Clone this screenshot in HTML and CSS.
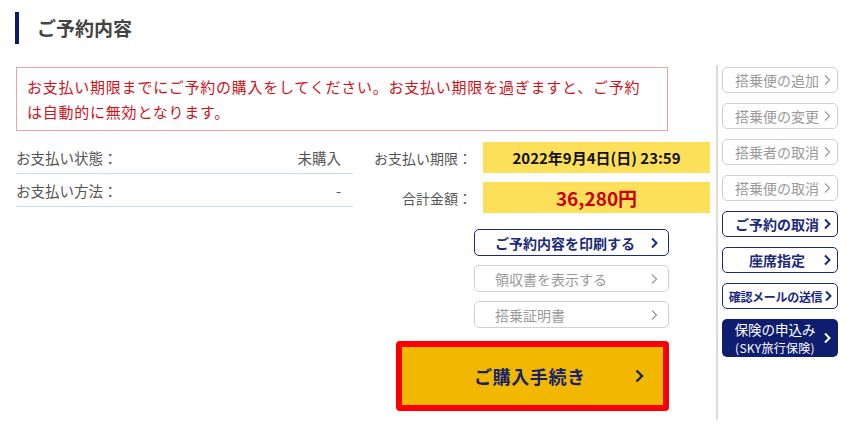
FILE: index.html
```html
<!DOCTYPE html>
<html lang="ja">
<head>
<meta charset="utf-8">
<title>ご予約内容</title>
<link rel="stylesheet" href="styles.css">
</head>
<body>
<div class="page">
  <div class="main">
    <h2 class="title">ご予約内容</h2>
    <div class="notice">お支払い期限までにご予約の購入をしてください。お支払い期限を過ぎますと、ご予約は自動的に無効となります。</div>
    <div class="info">
      <div class="status">
        <div class="status-row"><span>お支払い状態：</span><span>未購入</span></div>
        <div class="status-row"><span>お支払い方法：</span><span>-</span></div>
      </div>
      <div class="payment">
        <div class="pay-label">お支払い期限：</div>
        <div class="pay-box pay-date">2022年9月4日(日) 23:59</div>
        <div class="pay-label">合計金額：</div>
        <div class="pay-box pay-total">36,280円</div>
      </div>
    </div>
    <div class="actions">
      <a class="btn btn-navy"><span class="btn-text">ご予約内容を印刷する</span><svg class="chev" viewBox="0 0 8 12"><polyline points="2,1.5 6.5,6 2,10.5"/></svg></a>
      <a class="btn btn-off"><span class="btn-text">領収書を表示する</span><svg class="chev thin" viewBox="0 0 8 12"><polyline points="2,1.5 6.5,6 2,10.5"/></svg></a>
      <a class="btn btn-off"><span class="btn-text">搭乗証明書</span><svg class="chev thin" viewBox="0 0 8 12"><polyline points="2,1.5 6.5,6 2,10.5"/></svg></a>
    </div>
    <a class="purchase"><span class="purchase-text">ご購入手続き</span><svg class="chev big" viewBox="0 0 10 14"><polyline points="2.5,1.5 8,7 2.5,12.5"/></svg></a>
  </div>
  <div class="divider"></div>
  <div class="side">
    <a class="sbtn sbtn-off"><span class="sbtn-text">搭乗便の追加</span><svg class="chev thin" viewBox="0 0 8 12"><polyline points="2,1.5 6.5,6 2,10.5"/></svg></a>
    <a class="sbtn sbtn-off"><span class="sbtn-text">搭乗便の変更</span><svg class="chev thin" viewBox="0 0 8 12"><polyline points="2,1.5 6.5,6 2,10.5"/></svg></a>
    <a class="sbtn sbtn-off"><span class="sbtn-text">搭乗者の取消</span><svg class="chev thin" viewBox="0 0 8 12"><polyline points="2,1.5 6.5,6 2,10.5"/></svg></a>
    <a class="sbtn sbtn-off"><span class="sbtn-text">搭乗便の取消</span><svg class="chev thin" viewBox="0 0 8 12"><polyline points="2,1.5 6.5,6 2,10.5"/></svg></a>
    <a class="sbtn sbtn-navy"><span class="sbtn-text">ご予約の取消</span><svg class="chev" viewBox="0 0 8 12"><polyline points="2,1.5 6.5,6 2,10.5"/></svg></a>
    <a class="sbtn sbtn-navy"><span class="sbtn-text">座席指定</span><svg class="chev" viewBox="0 0 8 12"><polyline points="2,1.5 6.5,6 2,10.5"/></svg></a>
    <a class="sbtn sbtn-navy sbtn-small"><span class="sbtn-text">確認メールの送信</span><svg class="chev" viewBox="0 0 8 12"><polyline points="2,1.5 6.5,6 2,10.5"/></svg></a>
    <a class="sbtn sbtn-fill"><span class="sbtn-text"><span class="ins-main">保険の申込み</span><span class="ins-sub">(SKY旅行保険)</span></span><svg class="chev" viewBox="0 0 8 12"><polyline points="2,1.5 6.5,6 2,10.5"/></svg></a>
  </div>
</div>
</body>
</html>
```

FILE: styles.css
```css
* { box-sizing: border-box; }
html, body { margin: 0; padding: 0; background: #fff; }
body {
  font-family: "Noto Sans CJK JP", "Noto Sans", sans-serif;
  color: #555;
  width: 847px;
  height: 436px;
  overflow: hidden;
}
a { text-decoration: none; }

.page {
  display: flex;
  align-items: flex-start;
  padding-left: 16px;
}
.main {
  width: 694px;
  display: flex;
  flex-direction: column;
}
.title {
  margin: 12px 0 0 -1px;
  height: 32px;
  border-left: 4px solid #0b1a6b;
  padding-left: 18px;
  font-size: 19px;
  font-weight: 700;
  line-height: 32px;
  color: #444;
}
.notice {
  margin-top: 23px;
  width: 652px;
  border: 1px solid #eca3a3;
  padding: 6px 20px 6px 10px;
  font-size: 15px;
  letter-spacing: 0.77px;
  line-height: 25px;
  color: #d0121b;
}
.info {
  display: flex;
  margin-top: 10px;
}
.status {
  width: 337px;
}
.status-row {
  height: 33px;
  display: flex;
  justify-content: space-between;
  align-items: center;
  padding-right: 12px;
  border-bottom: 1px solid #c4dcf1;
  font-size: 14.5px;
  color: #555;
}
.payment {
  margin-left: auto;
  margin-top: 1px;
  display: grid;
  grid-template-columns: auto 227px;
  column-gap: 11px;
  row-gap: 9px;
  align-items: center;
}
.pay-label {
  text-align: right;
  font-size: 14px;
  color: #555;
}
.pay-box {
  height: 31px;
  background: #fde05a;
  display: flex;
  align-items: center;
  justify-content: center;
  font-weight: 700;
}
.pay-date { font-size: 15px; color: #111; }
.pay-total { font-size: 19px; color: #c8000a; }

.actions {
  margin-top: 16px;
  margin-left: 458px;
  width: 195px;
  display: flex;
  flex-direction: column;
  gap: 9px;
}
.btn {
  height: 27px;
  border-radius: 5px;
  display: flex;
  align-items: center;
  padding: 0 10px 0 20px;
  font-size: 14px;
}
.btn-text { flex: 1; }
.btn-navy {
  border: 1px solid #1b2a7b;
  color: #1b2a7b;
  font-weight: 700;
}
.btn-off {
  border: 1px solid #cfcfcf;
  color: #9a9a9a;
}
.chev {
  width: 8px;
  height: 12px;
  flex: none;
  fill: none;
  stroke: currentColor;
  stroke-width: 2;
}
.chev.thin { stroke-width: 1.2; }
.chev.big { width: 10px; height: 14px; stroke-width: 2.4; }

.purchase {
  margin-top: 13px;
  margin-left: 380px;
  width: 273px;
  height: 70px;
  border: 6px solid #fb0000;
  border-radius: 4px;
  background: #f2b800;
  display: flex;
  align-items: center;
  padding: 0 19px 0 72px;
  color: #15236e;
  font-size: 18px;
  font-weight: 700;
}
.purchase-text { flex: 1; letter-spacing: 0.6px; }

.divider {
  margin-top: 65px;
  margin-left: 6px;
  width: 2px;
  height: 355px;
  background: #dcdcdc;
}
.side {
  margin-top: 67px;
  margin-left: 4px;
  width: 116px;
  display: flex;
  flex-direction: column;
  gap: 10px;
}
.sbtn {
  height: 26px;
  border-radius: 5px;
  display: flex;
  align-items: center;
  padding: 0 6px 0 8px;
  font-size: 14px;
}
.sbtn-text { flex: 1; text-align: center; white-space: nowrap; }
.sbtn-off {
  border: 1px solid #cfcfcf;
  color: #9a9a9a;
}
.sbtn-navy {
  border: 1px solid #1b2a7b;
  color: #1b2a7b;
  font-weight: 700;
}
.sbtn-small {
  padding: 0 5px 0 4px;
  font-size: 12px;
  letter-spacing: -0.3px;
}
.sbtn-fill {
  height: 38px;
  background: #0e1d6e;
  color: #fff;
  padding: 0 7px 0 5px;
}
.sbtn-fill .sbtn-text {
  display: flex;
  flex-direction: column;
  align-items: center;
}
.ins-main { font-size: 13.5px; line-height: 20px; }
.ins-sub { font-size: 12px; line-height: 18px; letter-spacing: 0.3px; }
```
